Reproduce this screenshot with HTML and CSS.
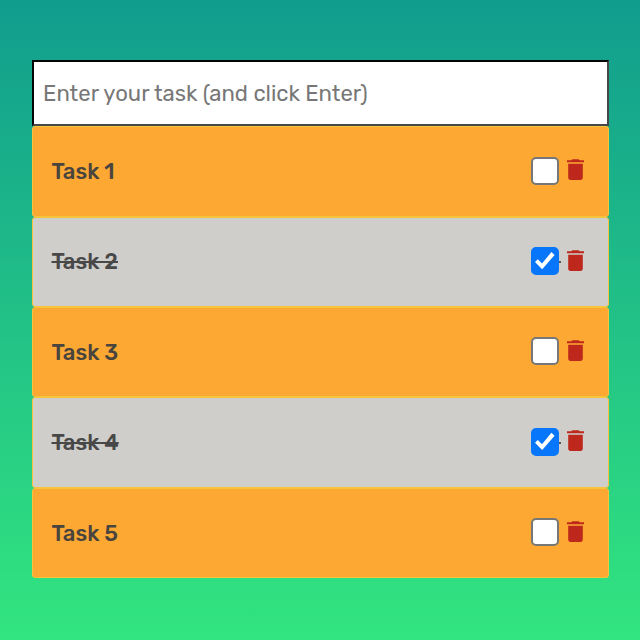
FILE: index.html
```html
<!DOCTYPE html>
<html lang="en">
<head>
<meta charset="utf-8">
<title>Tasks</title>
<link rel="stylesheet" href="styles.css">
</head>
<body>
<svg class="defs" aria-hidden="true">
  <symbol id="trash" viewBox="0 0 17 21"><path d="M0 1.3h4.3L5.4.2h6.2l1.1 1.1H17v2H0zM1.2 4.8h14.6v13.8c0 1.4-.9 2.3-2.3 2.3h-10c-1.4 0-2.3-.9-2.3-2.3z"/></symbol>
</svg>
<main class="todo">
  <input class="entry" type="text" placeholder="Enter your task (and click Enter)">
  <ul class="tasks">
    <li class="task"><span class="label">Task 1</span><input class="check" type="checkbox"><span class="gap"></span><svg class="trash"><use href="#trash"/></svg></li>
    <li class="task done"><span class="label">Task 2</span><input class="check" type="checkbox" checked><span class="gap"></span><svg class="trash"><use href="#trash"/></svg></li>
    <li class="task"><span class="label">Task 3</span><input class="check" type="checkbox"><span class="gap"></span><svg class="trash"><use href="#trash"/></svg></li>
    <li class="task done"><span class="label">Task 4</span><input class="check" type="checkbox" checked><span class="gap"></span><svg class="trash"><use href="#trash"/></svg></li>
    <li class="task"><span class="label">Task 5</span><input class="check" type="checkbox"><span class="gap"></span><svg class="trash"><use href="#trash"/></svg></li>
  </ul>
</main>
</body>
</html>
```

FILE: styles.css
```css
* { box-sizing: border-box; }
html { height: 100%; }
body {
  margin: 0;
  height: 640px;
  padding: 60px 32px 0;
  overflow: hidden;
  font-family: Rubik, Roboto, sans-serif;
  background: linear-gradient(#119d8e, #32e57f);
}
.defs { display: none; }
.todo { width: 576.5px; }
.entry {
  display: block;
  width: 100%;
  height: 66.2px;
  padding: 0 9px;
  border: 2px solid;
  border-color: #050505 #45474a #45474a #050505;
  border-radius: 0;
  background: #fff;
  font: 400 22.1px Rubik, Roboto, sans-serif;
  outline: none;
}
.entry::placeholder { color: #777; }
.tasks { margin: 0; padding: 0; list-style: none; }
.task {
  display: flex;
  align-items: center;
  height: 90.4px;
  padding: 0 23.5px 0 18.5px;
  border: 1.4px solid #f5c43c;
  border-radius: 3px;
  background: #fca833;
  color: #49443d;
}
.done { background: #cfcecb; color: #484848; }
.label {
  margin-right: auto;
  padding-top: 0.4px;
  font-size: 22.1px;
  font-weight: 500;
}
.done .label {
  text-decoration: line-through;
  text-decoration-thickness: 2px;
}
.check {
  appearance: none;
  width: 28px;
  height: 28px;
  margin: 0 0 1.4px;
  border: 2px solid #777;
  border-radius: 5px;
  background: #fff;
}
.check:checked {
  border-color: #0876fb;
  background: #0876fb;
  display: grid;
  place-items: center;
}
.check:checked::before {
  content: "";
  width: 20px;
  height: 20px;
  background: #fff;
  clip-path: polygon(0 55%, 14% 41%, 35% 62%, 82% 5%, 98% 19%, 36% 91%);
}
.gap { width: 8px; }
.done .gap {
  height: 2px;
  background: linear-gradient(90deg, #555 2px, transparent 2px);
}
.trash { width: 17px; height: 21px; margin-bottom: 3.2px; fill: #be281c; }
```
